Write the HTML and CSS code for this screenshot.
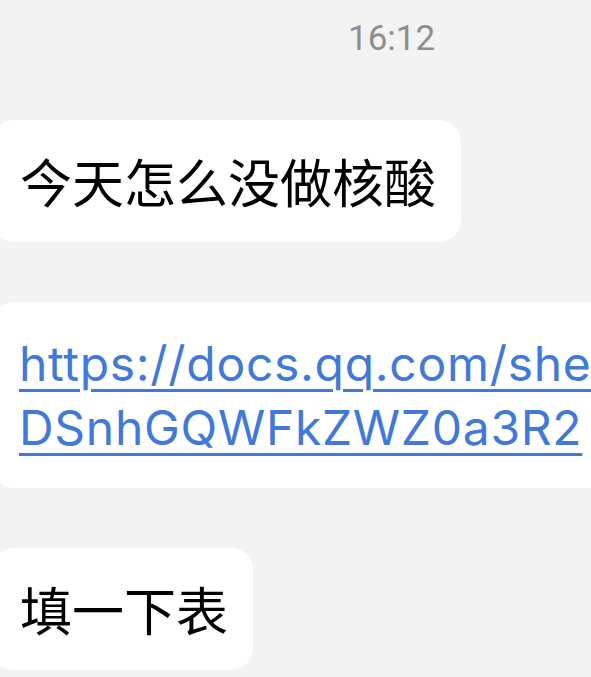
FILE: index.html
```html
<!DOCTYPE html>
<html lang="zh-CN">
<head>
    <meta charset="UTF-8">
    <meta name="viewport" content="width=device-width, initial-scale=1.0">
    <title>Chat</title>
    <link rel="stylesheet" href="styles.css">
</head>
<body>

    <div class="chat">
        <div class="time">16:12</div>

        <div class="bubble">今天怎么没做核酸</div>

        <div class="bubble link-bubble">
            <a href="#">https://docs.qq.com/sheet/<br>DSnhGQWFkZWZ0a3R2</a>
        </div>

        <div class="bubble">填一下表</div>
    </div>

</body>
</html>
```

FILE: styles.css
```css
body {
    margin: 0;
    background-color: #f3f3f3;
    font-family: Roboto, "Noto Sans CJK SC", sans-serif;
    overflow: hidden;
}

.chat {
    display: flex;
    flex-direction: column;
    align-items: flex-start;
    gap: 60px;
}

.time {
    padding: 18px 0 0 348px;
    font-size: 35px;
    line-height: 42px;
    color: #8e8e8e;
}

.bubble {
    margin-left: -8px;
    padding: 30px 25px 30px 28px;
    background-color: #ffffff;
    border-radius: 22px;
    font-family: "Noto Sans CJK SC", sans-serif;
    font-size: 52px;
    line-height: 62px;
    color: #000;
    white-space: nowrap;
}

.link-bubble {
    font-family: Inter, Roboto, sans-serif;
    font-size: 48px;
    line-height: 64px;
    letter-spacing: 0.7px;
    padding: 30px 40px 28px 27px;
}

.link-bubble a {
    color: #4279d8;
    text-decoration: underline;
    text-decoration-thickness: 3px;
    text-underline-offset: 8px;
}
```
